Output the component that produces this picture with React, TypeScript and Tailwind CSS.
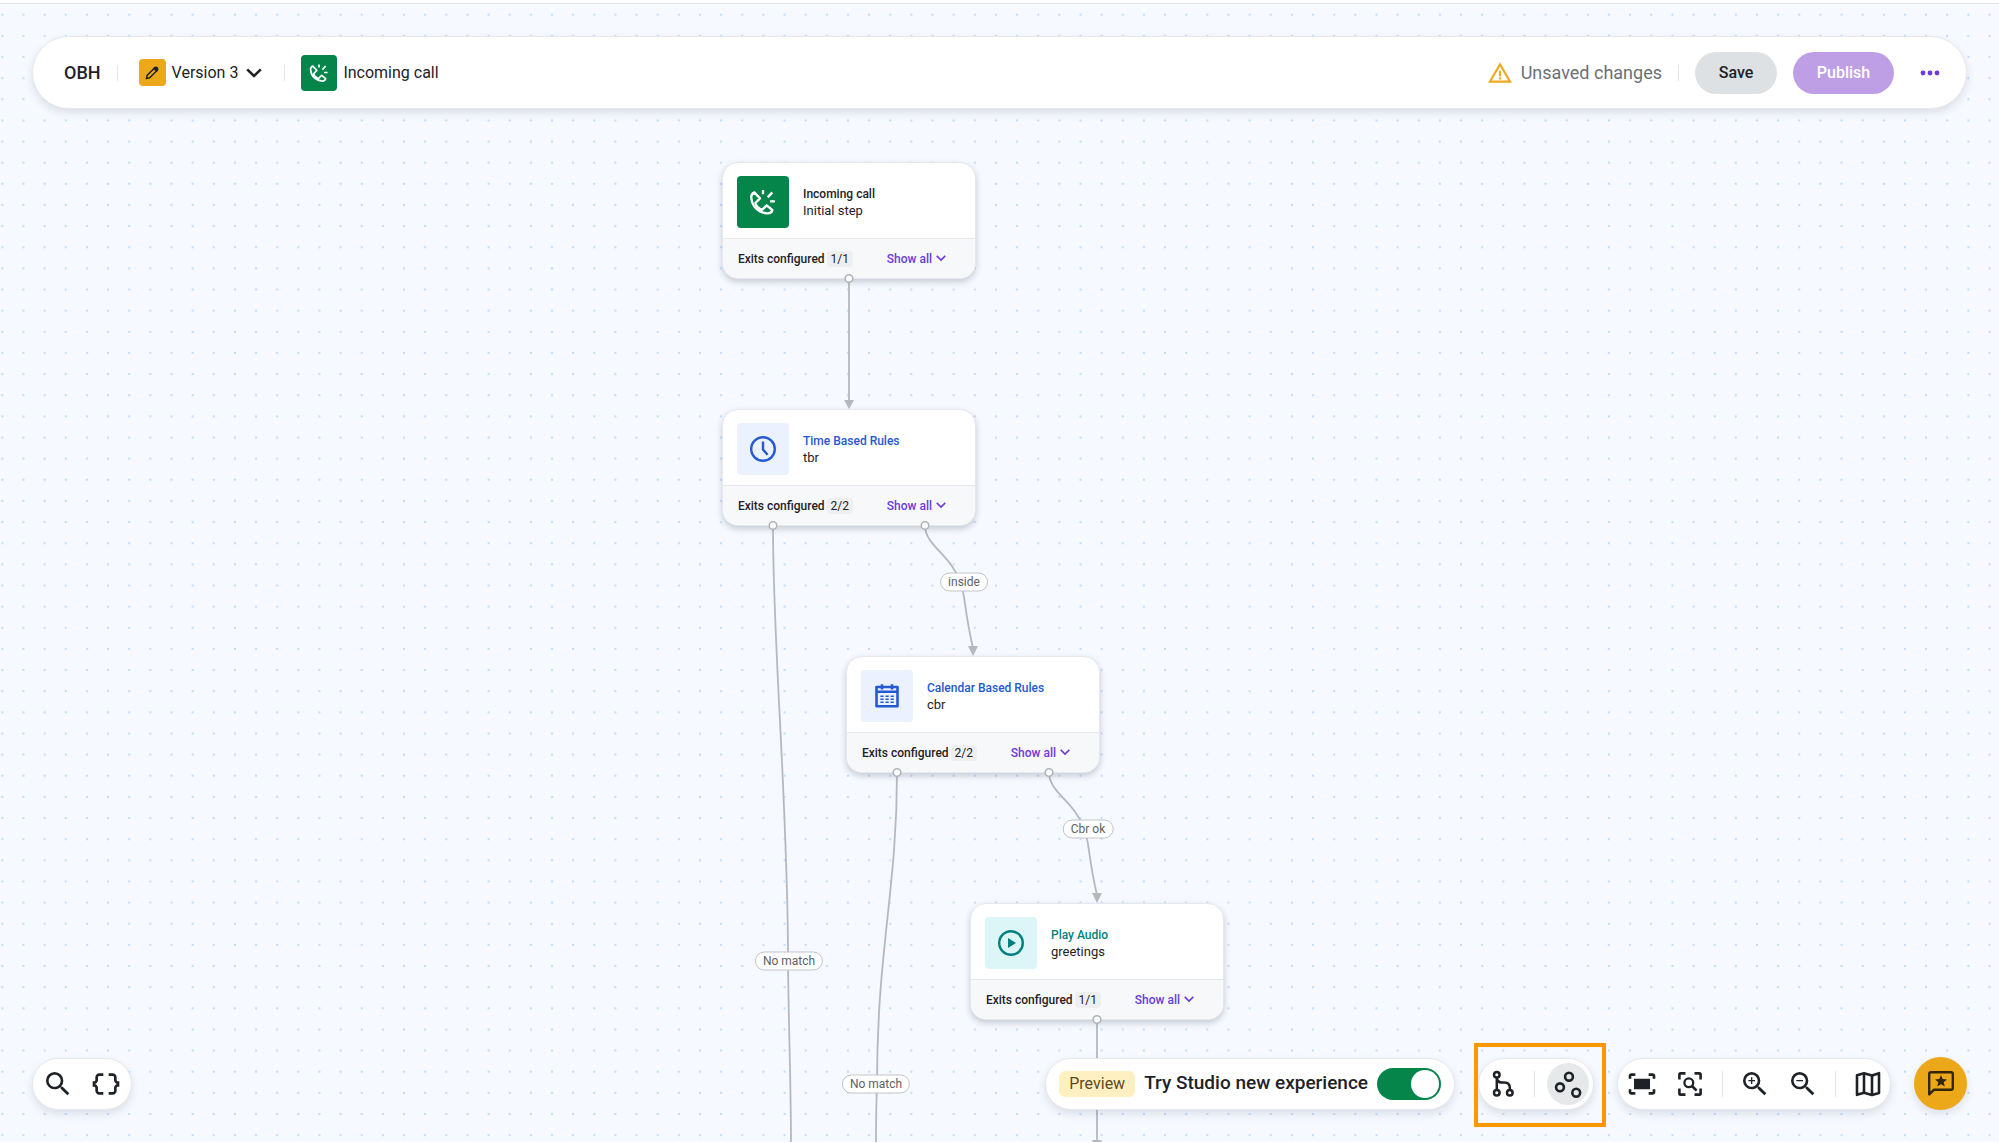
import type { ReactNode } from 'react'
import { MdDataObject, MdFitScreen, MdSearch, MdWarningAmber, MdZoomIn, MdZoomOut } from 'react-icons/md'

type FlowNode = {
  id: string
  kind: string
  name: string
  exits: string
  place: string
  kindColor: string
  iconBox: string
  icon: ReactNode
}

function PhoneIcon({ className }: { className: string }) {
  return (
    <svg viewBox="0 0 84 84" className={className} fill="none" stroke="currentColor" strokeWidth="7">
      <path d="M16 13C9 16 6 23 7 30C9 57 30 75 55 76C63 76 69 72 70 66L53 52L40 65Q24 60 19 45L33 31Z" strokeLinejoin="round" />
      <path d="M42 6V19M70 13L56 28M63 40H78" />
    </svg>
  )
}

function ClockIcon() {
  return (
    <svg viewBox="0 0 28 28" className="size-7" fill="none" stroke="currentColor" strokeWidth="2.4">
      <circle cx="14" cy="14" r="11.8" />
      <path d="M14 6.5V14.5L18.6 19.8" />
    </svg>
  )
}

function CalendarIcon() {
  return (
    <svg viewBox="0 0 28 28" className="size-7" fill="none" stroke="currentColor">
      <path d="M3.5 5H24.5V24.2H3.5Z" strokeWidth="2.6" strokeLinejoin="round" />
      <path d="M3.5 9.8H24.5" strokeWidth="2.4" />
      <path d="M9 2.2V7.5M19 2.2V7.5" strokeWidth="2.6" />
      <path d="M7.4 14.2H20.8M7.4 17.2H20.8M7.4 20.2H20.8" strokeWidth="1.5" strokeDasharray="3.2 1.9" />
    </svg>
  )
}

function PlayIcon() {
  return (
    <svg viewBox="0 0 28 28" className="size-7" fill="none" stroke="currentColor" strokeWidth="2.4">
      <circle cx="14" cy="14" r="11.8" />
      <path d="M11 9V19L19 14Z" fill="currentColor" stroke="none" />
    </svg>
  )
}

function PencilIcon() {
  return (
    <svg viewBox="0 0 14 14" className="size-3.5" fill="none" stroke="currentColor" strokeWidth="1.5" strokeLinejoin="round">
      <path d="M1.4 12.6L2.2 9.2L9.8 1.7Q10.9 1 12 2Q13 3.1 12.2 4.2L4.7 11.8Z" />
      <path d="M9 2.4L11.6 5L12.6 3.6L12 1.6L10.4 1.4Z" fill="currentColor" />
    </svg>
  )
}

function Chevron({ className }: { className: string }) {
  return (
    <svg viewBox="0 0 16 10" className={className} fill="none" stroke="currentColor" strokeWidth="2.6">
      <path d="M1.2 1.4L8 8L14.8 1.4" />
    </svg>
  )
}

function BranchIcon() {
  return (
    <svg viewBox="0 0 28 28" className="size-7" fill="none" stroke="currentColor" strokeWidth="2.5">
      <circle cx="7.8" cy="4.7" r="2.8" />
      <circle cx="7.8" cy="22.7" r="2.8" />
      <circle cx="20.8" cy="22.7" r="2.8" />
      <path d="M7.8 7.5V20M7.8 8Q8.4 12.4 12.5 12.4H15.5Q20.8 12.6 20.8 17.5V20" />
    </svg>
  )
}

function ScatterIcon() {
  return (
    <svg viewBox="0 0 28 28" className="size-7" fill="none" stroke="currentColor" strokeWidth="2.6">
      <circle cx="15" cy="6.7" r="3.9" />
      <circle cx="6" cy="17.3" r="3.9" />
      <circle cx="22.2" cy="22.7" r="3.9" />
    </svg>
  )
}

function ZoomToFrameIcon() {
  return (
    <svg viewBox="0 0 28 28" className="size-7" fill="none" stroke="currentColor" strokeWidth="2.6">
      <path d="M3.4 9.5V4.6Q3.4 3.4 4.6 3.4H9.5M18.5 3.4H23.4Q24.6 3.4 24.6 4.6V9.5M24.6 18.5V23.4Q24.6 24.6 23.4 24.6H18.5M9.5 24.6H4.6Q3.4 24.6 3.4 23.4V18.5" />
      <circle cx="12.8" cy="12.8" r="4.4" strokeWidth="2.3" />
      <path d="M16 16L20.6 20.6" />
    </svg>
  )
}

function MapIcon() {
  return (
    <svg viewBox="0 0 28 28" className="size-7" fill="none" stroke="currentColor" strokeWidth="2.6" strokeLinejoin="round">
      <path d="M3 5.2L10 3.2L18 5.4L25 3.2V23L18 25L10 22.8L3 24.8Z" />
      <path d="M10 3.2V22.8M18 5.4V25" />
    </svg>
  )
}

function FeedbackIcon() {
  return (
    <svg viewBox="0 0 28 28" className="size-7" fill="currentColor">
      <path
        d="M2.2 24.4V4Q2.2 2.2 4 2.2H24Q25.8 2.2 25.8 4V18Q25.8 19.8 24 19.8H6.8Z"
        fill="none"
        stroke="currentColor"
        strokeWidth="2.4"
        strokeLinejoin="round"
      />
      <path d="M14 5L15.7 9.1L20 9.4L16.7 12.2L17.8 16.5L14 14.2L10.2 16.5L11.3 12.2L8 9.4L12.3 9.1Z" />
    </svg>
  )
}

const nodes: FlowNode[] = [
  {
    id: 'incoming',
    kind: 'Incoming call',
    name: 'Initial step',
    exits: '1/1',
    place: 'left-[722px] top-[162px]',
    kindColor: 'text-[#1e2226]',
    iconBox: 'bg-[#058549] text-white',
    icon: <PhoneIcon className="size-7" />,
  },
  {
    id: 'tbr',
    kind: 'Time Based Rules',
    name: 'tbr',
    exits: '2/2',
    place: 'left-[722px] top-[409px]',
    kindColor: 'text-[#2459d1]',
    iconBox: 'bg-[#ebf1ff] text-[#2459d1]',
    icon: <ClockIcon />,
  },
  {
    id: 'cbr',
    kind: 'Calendar Based Rules',
    name: 'cbr',
    exits: '2/2',
    place: 'left-[846px] top-[656px]',
    kindColor: 'text-[#2459d1]',
    iconBox: 'bg-[#ebf1ff] text-[#2459d1]',
    icon: <CalendarIcon />,
  },
  {
    id: 'greetings',
    kind: 'Play Audio',
    name: 'greetings',
    exits: '1/1',
    place: 'left-[970px] top-[903px]',
    kindColor: 'text-[#047f80]',
    iconBox: 'bg-[#dcf6f7] text-[#047f80]',
    icon: <PlayIcon />,
  },
]

const labels = [
  { id: 'inside', text: 'inside', place: 'left-[964px] top-[582px]' },
  { id: 'cbr-ok', text: 'Cbr ok', place: 'left-[1088px] top-[829px]' },
  { id: 'tbr-none', text: 'No match', place: 'left-[789px] top-[961px]' },
  { id: 'cbr-none', text: 'No match', place: 'left-[876px] top-[1084px]' },
]

const edges = [
  'M849 279V401',
  'M773 526C773 650 787 790 788 950C788 1010 791 1080 791 1143',
  'M925 526C925 545 952 556 960 582C965 590 964 610 973 648',
  'M897 773C897 890 877 950 877 1084Q876 1110 876 1143',
  'M1049 773C1049 792 1076 803 1084 829C1089 837 1088 857 1097 895',
  'M1097 1020V1141',
]

const arrows = ['M844 400H854L849 409Z', 'M968 646H978L973 656Z', 'M1092 893H1102L1097 903Z', 'M1092 1140H1102L1097 1150Z']

const ports = [
  [849, 279],
  [773, 526],
  [925, 526],
  [897, 773],
  [1049, 773],
  [1097, 1020],
]

function StepCard({ node }: { node: FlowNode }) {
  return (
    <article
      className={`absolute flex w-[254px] flex-col overflow-hidden rounded-2xl border border-[#e6e8eb] bg-white shadow-[0_3px_6px_rgba(30,40,60,0.22)] ${node.place}`}
    >
      <div className="flex h-[75px] items-center gap-3.5 px-3.5 pt-[3px]">
        <div className={`flex size-[52px] items-center justify-center rounded-sm ${node.iconBox}`}>{node.icon}</div>
        <div className="flex flex-col pt-0.5 text-[#1e2226]">
          <h2 className={`text-[12px] leading-4 font-medium ${node.kindColor}`}>{node.kind}</h2>
          <p className="text-[13px] leading-[18px]">{node.name}</p>
        </div>
      </div>
      <div className="flex h-10 items-center border-t border-[#e6e8eb] bg-[#f7f8fa] px-[15px] text-[12px] leading-4">
        <span className="font-medium text-[#1e2226]">Exits configured</span>
        <span className="ml-0.5 rounded-sm bg-[#eeeff1] px-1 text-[#1e2226]">{node.exits}</span>
        <button type="button" className="mr-3.5 ml-auto flex items-center gap-1 font-medium text-[#6c3bdb]">
          Show all
          <Chevron className="w-2.5" />
        </button>
      </div>
    </article>
  )
}

function Divider({ className }: { className: string }) {
  return <span className={`w-px bg-[#e1e4e7] ${className}`} />
}

function Flow() {
  return (
    <main className="absolute inset-x-0 top-0 bottom-px overflow-hidden">
      <svg className="absolute inset-0 size-full">
        <defs>
          <pattern id="dots" x="-8.2" y="4.2" width="21.14" height="21.14" patternUnits="userSpaceOnUse">
            <circle cx="10.57" cy="10.57" r="1.1" fill="#bfdaff" />
          </pattern>
        </defs>
        <rect width="100%" height="100%" fill="url(#dots)" />
        <g fill="none" stroke="#b5b9bd" strokeWidth="1.8">
          {edges.map((d) => (
            <path key={d} d={d} />
          ))}
        </g>
        <g fill="#b5b9bd">
          {arrows.map((d) => (
            <path key={d} d={d} />
          ))}
        </g>
      </svg>
      {nodes.map((node) => (
        <StepCard key={node.id} node={node} />
      ))}
      <svg className="pointer-events-none absolute inset-0 size-full">
        {ports.map(([x, y]) => (
          <circle key={`${x}-${y}`} cx={x} cy={y - 0.5} r="3.8" fill="#fff" stroke="#b0b4b8" strokeWidth="1.6" />
        ))}
      </svg>
      {labels.map((label) => (
        <span
          key={label.id}
          className={`absolute -translate-1/2 rounded-full border border-[#c0c4c8] bg-white px-[7px] text-[12px] leading-[17px] whitespace-nowrap text-[#5c6166] ${label.place}`}
        >
          {label.text}
        </span>
      ))}
    </main>
  )
}

function Header() {
  return (
    <header className="relative mx-8 mt-8 flex h-[73px] items-center rounded-full border border-[#e6e8eb] bg-white pr-[26px] pl-[31px] text-[#1e2226] shadow-[0_4px_8px_rgba(30,40,60,0.12)]">
      <h1 className="text-[18px] leading-6 font-medium">OBH</h1>
      <Divider className="ml-4 h-4" />
      <button type="button" className="ml-[21px] flex items-center text-[16px] leading-6">
        <span className="mr-1.5 flex size-[27px] items-center justify-center rounded-sm bg-[#eca819]">
          <PencilIcon />
        </span>
        Version 3
        <Chevron className="ml-2 w-4" />
      </button>
      <Divider className="ml-[22px] h-4" />
      <div className="ml-4 flex items-center gap-1.5 text-[16px] leading-6">
        <span className="flex size-9 items-center justify-center rounded-sm bg-[#058549] text-white">
          <PhoneIcon className="size-5" />
        </span>
        Incoming call
      </div>
      <div className="ml-auto flex items-center gap-2 text-[18px] leading-6 text-[#6c7176]">
        <MdWarningAmber className="size-[26px] text-[#efa91c]" />
        Unsaved changes
      </div>
      <Divider className="ml-4 h-4" />
      <button type="button" className="ml-4 h-[42px] w-[82px] rounded-full bg-[#dde1e4] text-[16px] font-medium">
        Save
      </button>
      <button type="button" className="ml-4 h-[42px] w-[101px] rounded-full bg-[#be9fe6] text-[16px] font-medium text-white">
        Publish
      </button>
      <button type="button" aria-label="More actions" className="ml-[26px] text-[#6c3bdb]">
        <svg viewBox="0 0 20 6" className="w-5" fill="currentColor">
          <circle cx="3" cy="3" r="2.4" />
          <circle cx="10" cy="3" r="2.4" />
          <circle cx="17" cy="3" r="2.4" />
        </svg>
      </button>
    </header>
  )
}

const pill =
  'flex h-[52px] items-center rounded-full border border-[#e6e8eb] bg-white shadow-[0_4px_8px_rgba(30,40,60,0.12)]'

function Toolbars() {
  return (
    <footer className="relative mx-8 mt-auto mb-8 flex items-center text-[#1e2226]">
      <div className={`gap-4 px-[9px] ${pill}`}>
        <button type="button" aria-label="Search">
          <MdSearch className="size-8" />
        </button>
        <button type="button" aria-label="Variables">
          <MdDataObject className="size-8" />
        </button>
      </div>

      <label className={`ml-auto px-[13px] text-[19px] font-medium ${pill}`}>
        <span className="mr-[9px] rounded-md bg-[#fff0c2] px-2.5 text-[16px] leading-[26px] font-normal text-[#5e4a1e]">
          Preview
        </span>
        Try Studio new experience
        <input
          type="checkbox"
          role="switch"
          defaultChecked
          className="ml-[9px] flex h-8 w-16 appearance-none items-center justify-end rounded-full bg-[#058549] px-0.5 before:size-7 before:rounded-full before:bg-white"
        />
      </label>

      <div className="relative ml-[23px]">
        <div className={`pr-1 pl-2.5 ${pill}`}>
          <button type="button" aria-label="Tree layout">
            <BranchIcon />
          </button>
          <Divider className="ml-[17px] h-[26px]" />
          <button type="button" aria-label="Free layout" className="ml-3 flex size-[42px] items-center justify-center rounded-full bg-[#e6e8e9]">
            <ScatterIcon />
          </button>
        </div>
        <div className="pointer-events-none absolute -top-[15px] -right-3 -bottom-[17px] -left-1 border-4 border-[#ff9800]" />
      </div>

      <div className={`ml-[23px] px-2 ${pill}`}>
        <button type="button" aria-label="Fit to screen">
          <MdFitScreen className="size-8" />
        </button>
        <button type="button" aria-label="Zoom to selection" className="ml-[18px]">
          <ZoomToFrameIcon />
        </button>
        <Divider className="ml-[18px] h-[26px]" />
        <button type="button" aria-label="Zoom in" className="ml-4">
          <MdZoomIn className="size-8" />
        </button>
        <button type="button" aria-label="Zoom out" className="ml-4">
          <MdZoomOut className="size-8" />
        </button>
        <Divider className="ml-4 h-[26px]" />
        <button type="button" aria-label="Minimap" className="ml-[18px]">
          <MapIcon />
        </button>
      </div>

      <button
        type="button"
        aria-label="Send feedback"
        className="ml-[23px] flex size-[53px] items-center justify-center rounded-full bg-[#eca819] text-[#33260a] shadow-[0_4px_8px_rgba(30,40,60,0.12)]"
      >
        <FeedbackIcon />
      </button>
    </footer>
  )
}

export default function App() {
  return (
    <div className="h-screen bg-white pt-[3px] pb-px font-[Roboto,sans-serif]">
      <div className="flex h-full flex-col border-t border-[#e1e4e7] bg-[#f6f9ff]">
        <Flow />
        <Header />
        <Toolbars />
      </div>
    </div>
  )
}
